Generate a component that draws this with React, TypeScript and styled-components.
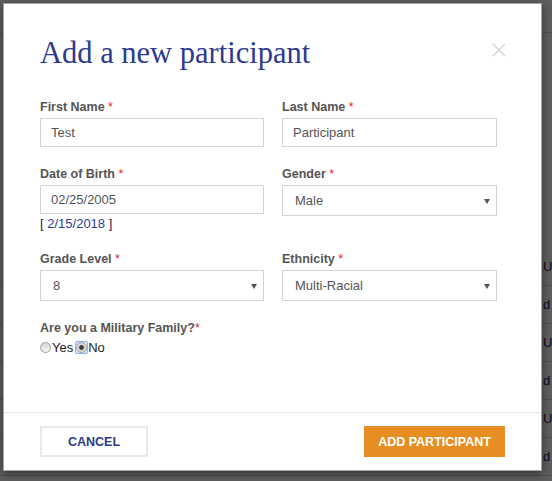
import React from "react";
import styled, { createGlobalStyle } from "styled-components";

const GlobalStyle = createGlobalStyle`
  html, body {
    margin: 0;
    padding: 0;
  }
  body {
    font-family: "Liberation Sans", Arial, sans-serif;
    background: #fff;
  }
`;

const Page = styled.div`
  position: relative;
  width: 552px;
  height: 481px;
  overflow: hidden;
  background: #fff;
`;

const TopBar = styled.div`
  height: 32px;
  border-bottom: 1px solid #d8d8d8;
`;

const Table = styled.div`
  margin-top: 215px;
`;

const TableRow = styled.div`
  display: flex;
  justify-content: flex-end;
  align-items: center;
  height: 37px;
  border-bottom: 1px solid #d4d4d4;
  font-size: 13px;
  color: #16225e;
`;

const RightCell = styled.span`
  width: 9px;
`;

const Overlay = styled.div`
  position: absolute;
  inset: 0;
  background: rgba(0, 0, 0, 0.63);
`;

const Modal = styled.div`
  position: absolute;
  top: 3px;
  left: 3px;
  width: 539px;
  box-sizing: border-box;
  background: #fff;
  border: 1px solid rgba(0, 0, 0, 0.35);
  box-shadow: 0 3px 9px rgba(0, 0, 0, 0.45);
`;

const Header = styled.div`
  display: flex;
  justify-content: space-between;
  align-items: flex-start;
  padding: 32px 35px 0 36px;
`;

const Title = styled.h1`
  margin: 0;
  font-family: "Liberation Serif", "Times New Roman", serif;
  font-weight: 400;
  font-size: 30.5px;
  line-height: 34px;
  color: #2d3a8e;
`;

const CloseButton = styled.button`
  margin-top: 7px;
  padding: 0;
  width: 14px;
  height: 14px;
  border: none;
  background: none;
  cursor: pointer;
  display: flex;
`;

const Body = styled.div`
  padding: 30px 0 57px 36px;
`;

const FieldGrid = styled.div`
  display: grid;
  grid-template-columns: 224px 215px;
  column-gap: 18px;
  row-gap: 20px;
`;

const Field = styled.div`
  display: flex;
  flex-direction: column;
`;

const Label = styled.label`
  display: block;
  font-weight: 700;
  font-size: 12.5px;
  line-height: 14px;
  color: #555;
  margin-bottom: 4px;
`;

const Req = styled.span`
  color: #e3262b;
  font-weight: 400;
`;

const TextInput = styled.input`
  display: block;
  box-sizing: border-box;
  width: 100%;
  height: 29px;
  margin: 0;
  padding: 0 10px;
  border: 1px solid #d3d3d3;
  border-radius: 0;
  font-family: "Liberation Sans", Arial, sans-serif;
  font-size: 13px;
  color: #555;
  background: #fff;
  outline: none;
`;

const SelectWrap = styled.div`
  position: relative;
`;

const Select = styled.select`
  display: block;
  box-sizing: border-box;
  width: 100%;
  height: 31px;
  margin: 0;
  padding: 0 12px;
  border: 1px solid #d3d3d3;
  border-radius: 0;
  appearance: none;
  font-family: "Liberation Sans", Arial, sans-serif;
  font-size: 13px;
  color: #555;
  background: #fff;
  outline: none;
`;

const Caret = styled.svg`
  position: absolute;
  right: 7px;
  top: 14px;
  pointer-events: none;
`;

const DateNote = styled.div`
  margin-top: 2px;
  font-size: 13px;
  line-height: 16px;
  color: #2a2250;
`;

const DateLink = styled.a`
  color: #2d3a8e;
  text-decoration: none;
`;

const Military = styled.div`
  margin-top: 20px;
`;

const RadioRow = styled.div`
  display: flex;
  align-items: center;
  margin-top: 5px;
  height: 15px;
  font-size: 13px;
  color: #222;
`;

const FocusRing = styled.span`
  display: inline-flex;
  margin-left: 2px;
  border: 1px solid #8eaef0;
  border-radius: 2px;
  background: #dbe6fb;
`;

const Radio = styled.input.attrs({ type: "radio" })`
  appearance: none;
  box-sizing: border-box;
  width: 11px;
  height: 11px;
  margin: 0;
  border: 1px solid #a2a2a2;
  border-radius: 50%;
  background: linear-gradient(#d6d6d6, #f4f4f4);

  &:checked {
    background: radial-gradient(circle, #3d3d3d 0 2px, #cfcfcf 2.6px, #ececec 100%);
  }
`;

const RadioText = styled.span<{ $gap?: number }>`
  margin-left: ${(p) => p.$gap ?? 0}px;
`;

const Footer = styled.div`
  display: flex;
  justify-content: space-between;
  padding: 13px 36px;
  border-top: 1px solid #e5e5e5;
`;

const Button = styled.button<{ $primary?: boolean }>`
  box-sizing: border-box;
  height: 31px;
  width: ${(p) => (p.$primary ? 141 : 108)}px;
  padding: 0;
  border: ${(p) => (p.$primary ? "none" : "2px solid #e4eaea")};
  background: ${(p) => (p.$primary ? "#e68e22" : "#fff")};
  color: ${(p) => (p.$primary ? "#fff" : "#2d3a8e")};
  font-family: "Liberation Sans", Arial, sans-serif;
  font-weight: 700;
  font-size: 12.5px;
  text-transform: uppercase;
  cursor: pointer;
`;

// edge of the page table that peeks out right of the dialog
const backRows = ["U", "d", "U", "d", "U", "d"];

function SelectField({ value, options }: { value: string; options: string[] }) {
  return (
    <SelectWrap>
      <Select defaultValue={value}>
        {options.map((o) => (
          <option key={o}>{o}</option>
        ))}
      </Select>
      <Caret width="6" height="5" viewBox="0 0 6 5">
        <path d="M0 0H6L3 5Z" fill="#555" />
      </Caret>
    </SelectWrap>
  );
}

export default function App() {
  return (
    <>
      <GlobalStyle />
      <Page>
        <TopBar />
        <Table>
          {backRows.map((r, i) => (
            <TableRow key={i}>
              <RightCell>{r}</RightCell>
            </TableRow>
          ))}
        </Table>
        <Overlay />
        <Modal>
          <Header>
            <Title>Add a new participant</Title>
            <CloseButton aria-label="Close">
              <svg width="14" height="14" viewBox="0 0 14 14">
                <path d="M1 1L13 13M13 1L1 13" stroke="#d2d2d2" strokeWidth="1.4" />
              </svg>
            </CloseButton>
          </Header>
          <Body>
            <FieldGrid>
              <Field>
                <Label>
                  First Name <Req>*</Req>
                </Label>
                <TextInput defaultValue="Test" />
              </Field>
              <Field>
                <Label>
                  Last Name <Req>*</Req>
                </Label>
                <TextInput defaultValue="Participant" />
              </Field>
              <Field>
                <Label>
                  Date of Birth <Req>*</Req>
                </Label>
                <TextInput defaultValue="02/25/2005" />
                <DateNote>
                  [ <DateLink>2/15/2018</DateLink> ]
                </DateNote>
              </Field>
              <Field>
                <Label>
                  Gender <Req>*</Req>
                </Label>
                <SelectField value="Male" options={["Male", "Female"]} />
              </Field>
              <Field>
                <Label>
                  Grade Level <Req>*</Req>
                </Label>
                <SelectField value="8" options={["6", "7", "8", "9", "10"]} />
              </Field>
              <Field>
                <Label>
                  Ethnicity <Req>*</Req>
                </Label>
                <SelectField
                  value="Multi-Racial"
                  options={["Asian", "Black", "Hispanic", "Multi-Racial", "White"]}
                />
              </Field>
            </FieldGrid>
            <Military>
              <Label>
                Are you a Military Family?<Req>*</Req>
              </Label>
              <RadioRow>
                <Radio name="military" />
                <RadioText $gap={1}>Yes</RadioText>
                <FocusRing>
                  <Radio name="military" defaultChecked />
                </FocusRing>
                <RadioText>No</RadioText>
              </RadioRow>
            </Military>
          </Body>
          <Footer>
            <Button>Cancel</Button>
            <Button $primary>Add Participant</Button>
          </Footer>
        </Modal>
      </Page>
    </>
  );
}
